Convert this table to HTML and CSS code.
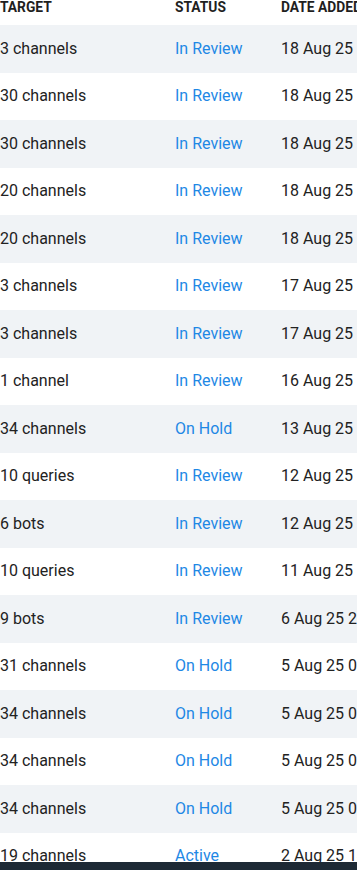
FILE: index.html
```html
<!DOCTYPE html>
<html>
<head>
<meta charset="utf-8">
<link rel="stylesheet" href="styles.css">
</head>
<body>
<div class="viewport">
  <div class="table">
    <div class="row head">
      <div class="cell">TARGET</div>
      <div class="cell">STATUS</div>
      <div class="cell">DATE ADDED</div>
    </div>
    <div class="row"><div class="cell">3 channels</div><div class="cell status">In Review</div><div class="cell">18 Aug 25 14:22</div></div>
    <div class="row"><div class="cell">30 channels</div><div class="cell status">In Review</div><div class="cell">18 Aug 25 13:10</div></div>
    <div class="row"><div class="cell">30 channels</div><div class="cell status">In Review</div><div class="cell">18 Aug 25 12:47</div></div>
    <div class="row"><div class="cell">20 channels</div><div class="cell status">In Review</div><div class="cell">18 Aug 25 11:05</div></div>
    <div class="row"><div class="cell">20 channels</div><div class="cell status">In Review</div><div class="cell">18 Aug 25 10:58</div></div>
    <div class="row"><div class="cell">3 channels</div><div class="cell status">In Review</div><div class="cell">17 Aug 25 16:31</div></div>
    <div class="row"><div class="cell">3 channels</div><div class="cell status">In Review</div><div class="cell">17 Aug 25 09:14</div></div>
    <div class="row"><div class="cell">1 channel</div><div class="cell status">In Review</div><div class="cell">16 Aug 25 18:40</div></div>
    <div class="row"><div class="cell">34 channels</div><div class="cell status">On Hold</div><div class="cell">13 Aug 25 15:02</div></div>
    <div class="row"><div class="cell">10 queries</div><div class="cell status">In Review</div><div class="cell">12 Aug 25 17:26</div></div>
    <div class="row"><div class="cell">6 bots</div><div class="cell status">In Review</div><div class="cell">12 Aug 25 11:48</div></div>
    <div class="row"><div class="cell">10 queries</div><div class="cell status">In Review</div><div class="cell">11 Aug 25 14:09</div></div>
    <div class="row"><div class="cell">9 bots</div><div class="cell status">In Review</div><div class="cell">6 Aug 25 20:15</div></div>
    <div class="row"><div class="cell">31 channels</div><div class="cell status">On Hold</div><div class="cell">5 Aug 25 09:33</div></div>
    <div class="row"><div class="cell">34 channels</div><div class="cell status">On Hold</div><div class="cell">5 Aug 25 09:21</div></div>
    <div class="row"><div class="cell">34 channels</div><div class="cell status">On Hold</div><div class="cell">5 Aug 25 09:12</div></div>
    <div class="row"><div class="cell">34 channels</div><div class="cell status">On Hold</div><div class="cell">5 Aug 25 09:05</div></div>
    <div class="row"><div class="cell">19 channels</div><div class="cell status">Active</div><div class="cell">2 Aug 25 14:50</div></div>
    <div class="row"><div class="cell">12 channels</div><div class="cell status">Active</div><div class="cell">1 Aug 25 10:20</div></div>
  </div>
</div>
<div class="bottom-bar"></div>
</body>
</html>
```
FILE: styles.css
```css
html, body {
  margin: 0;
  padding: 0;
  background: #ffffff;
  overflow: hidden;
}
body {
  font-family: Roboto, "Liberation Sans", sans-serif;
  color: #222222;
  width: 357px;
  height: 870px;
}
.viewport {
  width: 357px;
  height: 870px;
  overflow: hidden;
}
.table {
  width: 460px;
  display: flex;
  flex-direction: column;
}
.row {
  display: grid;
  grid-template-columns: 175px 106px 1fr;
  height: 47.5px;
  align-items: center;
  font-size: 16px;
  line-height: 18px;
  white-space: nowrap;
}
.row:nth-child(even) {
  background: #f0f3f6;
}
.row.head {
  height: 25px;
  align-items: start;
  font-size: 13.8px;
  font-weight: 700;
  color: #1f1f1f;
  line-height: 14px;
}
.status {
  color: #1e88e5;
}
.bottom-bar {
  position: fixed;
  left: 0;
  right: 0;
  bottom: 0;
  height: 8px;
  background: #1d2935;
}
```
